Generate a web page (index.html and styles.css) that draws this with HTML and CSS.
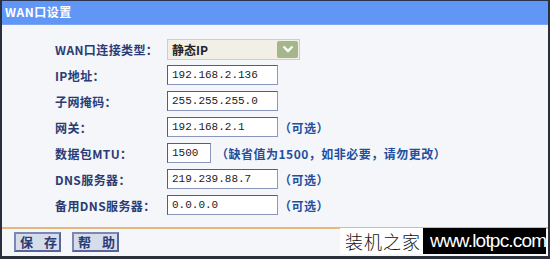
FILE: index.html
```html
<!DOCTYPE html>
<html lang="zh-CN">
<head>
<meta charset="utf-8">
<title>WAN口设置</title>
<link rel="stylesheet" href="styles.css">
</head>
<body>
<div class="frame">
  <div class="titlebar">WAN口设置</div>
  <div class="form">
    <div class="row">
      <span class="label">WAN口连接类型：</span>
      <div class="select"><span>静态IP</span><span class="drop"><svg width="12" height="8" viewBox="0 0 12 8"><path d="M1.5 1.5 L6 6 L10.5 1.5" fill="none" stroke="#fff" stroke-width="2.4"/></svg></span></div>
    </div>
    <div class="row">
      <span class="label">IP地址：</span>
      <span class="input">192.168.2.136</span>
    </div>
    <div class="row">
      <span class="label">子网掩码：</span>
      <span class="input">255.255.255.0</span>
    </div>
    <div class="row">
      <span class="label">网关：</span>
      <span class="input">192.168.2.1</span>
      <span class="hint">（可选）</span>
    </div>
    <div class="row">
      <span class="label">数据包MTU：</span>
      <span class="input short">1500</span>
      <span class="hint">（缺省值为1500，如非必要，请勿更改）</span>
    </div>
    <div class="row">
      <span class="label">DNS服务器：</span>
      <span class="input">219.239.88.7</span>
      <span class="hint">（可选）</span>
    </div>
    <div class="row">
      <span class="label">备用DNS服务器：</span>
      <span class="input">0.0.0.0</span>
      <span class="hint">（可选）</span>
    </div>
  </div>
  <div class="footer">
    <button class="btn">保 存</button>
    <button class="btn">帮 助</button>
  </div>
  <div class="watermark"><span class="wm-cn">装机之家</span><span class="wm-url">www.lotpc.com</span></div>
</div>
</body>
</html>
```
FILE: styles.css
```css
html, body {
  margin: 0;
  padding: 0;
  background: #f4f6f9;
}
.frame {
  position: relative;
  box-sizing: border-box;
  width: 550px;
  height: 259px;
  overflow: hidden;
  border-top: 1px solid #2c3550;
  border-left: 2px solid #2a2f3c;
  border-right: 2px solid #2a2f3c;
  border-bottom: 3px solid #2a2f3c;
  background: #f4f6f9;
  display: flex;
  flex-direction: column;
  font-family: "Noto Sans CJK SC", sans-serif;
}
.titlebar {
  height: 23px;
  line-height: 22px;
  background: #6096f6;
  border-bottom: 1px solid #7aa6f4;
  color: #fff;
  font-size: 12px;
  font-weight: bold;
  padding-left: 3px;
  letter-spacing: 0.5px;
}
.form {
  padding: 11px 0 0 53px;
  display: flex;
  flex-direction: column;
}
.row {
  height: 26px;
  display: flex;
  align-items: center;
}
.label {
  width: 112px;
  font-size: 12px;
  font-weight: bold;
  color: #2b3b74;
  letter-spacing: 0.4px;
}
.select {
  box-sizing: border-box;
  width: 133px;
  height: 21px;
  background: #f1efe6;
  border: 1px solid #cfcfc6;
  display: flex;
  align-items: center;
  justify-content: space-between;
  padding: 0 1px 0 4px;
  font-size: 12px;
  font-weight: bold;
  color: #222;
}
.drop {
  width: 21px;
  height: 17px;
  background: #a6b68c;
  border-radius: 2px;
  display: flex;
  align-items: center;
  justify-content: center;
}
.input {
  box-sizing: border-box;
  width: 111px;
  height: 20px;
  background: #fff;
  border: 1px solid #4d5d92;
  border-right-color: #8a96bc;
  border-bottom-color: #8a96bc;
  font-family: "Liberation Mono", monospace;
  font-size: 11px;
  line-height: 18px;
  padding-left: 4px;
  color: #222;
}
.input.short {
  width: 44px;
}
.hint {
  margin-left: 1px;
  font-size: 12px;
  font-weight: bold;
  color: #1f4f9e;
  letter-spacing: 0.5px;
}
.input.short + .hint {
  margin-left: 5px;
}
.footer {
  margin-top: auto;
  height: 26px;
  border-top: 2px solid #e8b87c;
  display: flex;
  align-items: center;
  gap: 11px;
  padding-left: 12px;
  padding-bottom: 1px;
}
.btn {
  box-sizing: border-box;
  width: 47px;
  height: 20px;
  padding: 0 0 0 4px;
  background: #d7dcea;
  border: 2px solid #56649a;
  border-top-color: #7b88b6;
  border-left-color: #7b88b6;
  font-family: "Noto Sans CJK SC", sans-serif;
  font-size: 13px;
  font-weight: bold;
  color: #2b3b74;
  line-height: 16px;
  letter-spacing: 4px;
  white-space: nowrap;
}
.watermark {
  position: absolute;
  left: 338px;
  top: 227px;
  height: 26px;
  display: flex;
  white-space: nowrap;
}
.wm-cn {
  background: #fff;
  color: #111;
  width: 83px;
  font-size: 18px;
  font-weight: 300;
  letter-spacing: 1px;
  line-height: 26px;
  padding-left: 5px;
  box-sizing: border-box;
}
.wm-url {
  background: #000;
  color: #fff;
  width: 123px;
  font-family: "Liberation Sans", sans-serif;
  font-size: 19px;
  letter-spacing: -0.8px;
  line-height: 26px;
  padding-left: 7px;
  box-sizing: border-box;
}
```
